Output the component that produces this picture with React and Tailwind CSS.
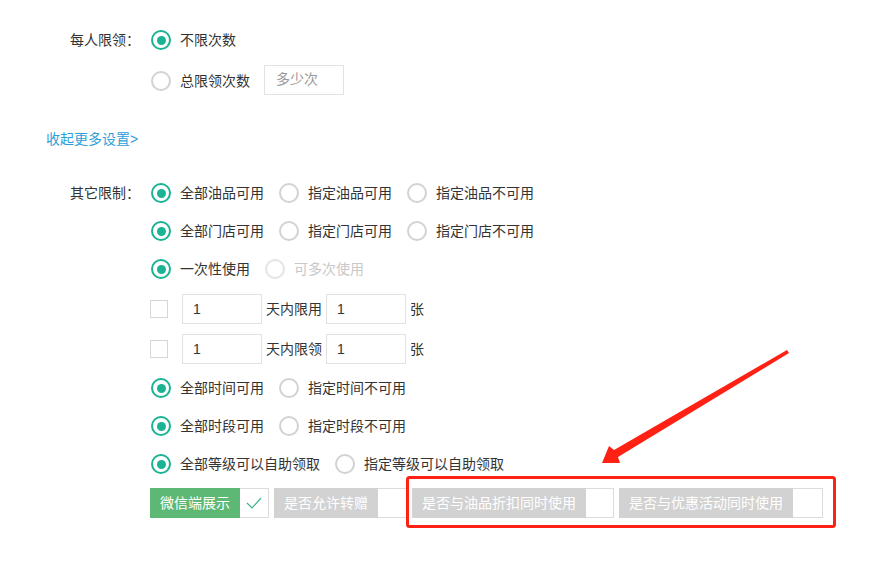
import React from 'react';

function Radio({ checked, disabled, label, className = 'mr-[15px]' }) {
  return (
    <label className={`flex items-center ${className}`}>
      <span
        className={`w-[20px] h-[20px] rounded-full flex items-center justify-center shrink-0 ${
          checked ? 'border-2 border-[#1ab394]' : 'border-2 border-[#d2d2d2]'
        } ${disabled ? 'opacity-60' : ''}`}
      >
        {checked && <span className="w-[9px] h-[9px] rounded-full bg-[#1ab394]" />}
      </span>
      <span className={`ml-[9px] ${disabled ? 'text-[#c8c8c8]' : 'text-[#333]'}`}>{label}</span>
    </label>
  );
}

function Field({ value, placeholder, className = '' }) {
  return (
    <div className={`w-[80px] h-[30px] border border-[#e2e2e2] flex items-center ${value ? 'px-[10px]' : 'px-[11px]'} ${className}`}>
      {value ? <span className="text-[#333]">{value}</span> : <span className="text-[#999]">{placeholder}</span>}
    </div>
  );
}

function Toggle({ label, on, className = '', boxW = 'w-[29px]' }) {
  return (
    <div className={`flex h-[30px] ${className}`}>
      <div className={`h-full flex items-center px-[10px] text-white ${on ? 'bg-[#5cb874]' : 'bg-[#d2d2d2]'}`}>{label}</div>
      <div className={`h-full ${boxW} border border-l-0 border-[#dcdcdc] bg-white flex items-center justify-center`}>
        {on && (
          <svg width="16" height="12" viewBox="0 0 16 12" fill="none">
            <path d="M1 6 L6 11 L15 1" stroke="#3fb38a" strokeWidth="1.2" />
          </svg>
        )}
      </div>
    </div>
  );
}

function Row({ label, children, className = 'h-[38px]' }) {
  return (
    <div className={`flex items-center ${className}`}>
      <div className="w-[140px] text-right text-[#333]">{label}</div>
      <div className="flex items-center ml-[11px]">{children}</div>
    </div>
  );
}

export default function App() {
  return (
    <div className="relative w-[893px] h-[568px] bg-white text-[14px] font-['Liberation_Sans','Noto_Sans_CJK_SC',sans-serif] overflow-hidden">
      <div className="pt-[21px]">
        <Row label="每人限领：">
          <Radio checked label="不限次数" />
        </Row>
        <Row label="" className="h-[38px] mt-[3px]">
          <Radio label="总限领次数" className="mr-[14px]" />
          <Field placeholder="多少次" className="-mt-[3px]" />
        </Row>

        <div className="h-[38px] mt-[20px] flex items-center pl-[46px]">
          <a className="text-[#2d9fd8]">收起更多设置&gt;</a>
        </div>

        <Row label="其它限制：" className="h-[38px] mt-[16px]">
          <Radio checked label="全部油品可用" />
          <Radio label="指定油品可用" />
          <Radio label="指定油品不可用" />
        </Row>
        <Row label="">
          <Radio checked label="全部门店可用" />
          <Radio label="指定门店可用" />
          <Radio label="指定门店不可用" />
        </Row>
        <Row label="">
          <Radio checked label="一次性使用" />
          <Radio disabled label="可多次使用" />
        </Row>

        <Row label="" className="h-[40px] mt-[1px]">
          <span className="w-[18px] h-[18px] border border-[#d6d6d6] -ml-px" />
          <Field value="1" className="ml-[14px]" />
          <span className="ml-[4px] text-[#333]">天内限用</span>
          <Field value="1" className="ml-[4px]" />
          <span className="ml-[4px] text-[#333]">张</span>
        </Row>
        <Row label="" className="h-[40px]">
          <span className="w-[18px] h-[18px] border border-[#d6d6d6] -ml-px" />
          <Field value="1" className="ml-[14px]" />
          <span className="ml-[4px] text-[#333]">天内限领</span>
          <Field value="1" className="ml-[4px]" />
          <span className="ml-[4px] text-[#333]">张</span>
        </Row>

        <Row label="">
          <Radio checked label="全部时间可用" />
          <Radio label="指定时间不可用" />
        </Row>
        <Row label="">
          <Radio checked label="全部时段可用" />
          <Radio label="指定时段不可用" />
        </Row>
        <Row label="">
          <Radio checked label="全部等级可以自助领取" />
          <Radio label="指定等级可以自助领取" />
        </Row>

        <Row label="" className="h-[40px]">
          <div className="flex -ml-px">
            <Toggle on label="微信端展示" />
            <Toggle label="是否允许转赠" className="ml-[5px]" boxW="w-[30px]" />
            <Toggle label="是否与油品折扣同时使用" className="ml-[4px]" boxW="w-[28px]" />
            <Toggle label="是否与优惠活动同时使用" className="ml-[5px]" boxW="w-[30px]" />
          </div>
        </Row>
      </div>

      <svg className="absolute left-0 top-0 pointer-events-none" width="893" height="568" viewBox="0 0 893 568">
        <rect x="407.5" y="477.5" width="427" height="49" rx="2" fill="none" stroke="#ff2214" strokeWidth="3" />
        <polygon
          points="787,350 614,450 609,446 602,463 620,463 618,457 789,353"
          fill="#ff2214"
        />
      </svg>
    </div>
  );
}
